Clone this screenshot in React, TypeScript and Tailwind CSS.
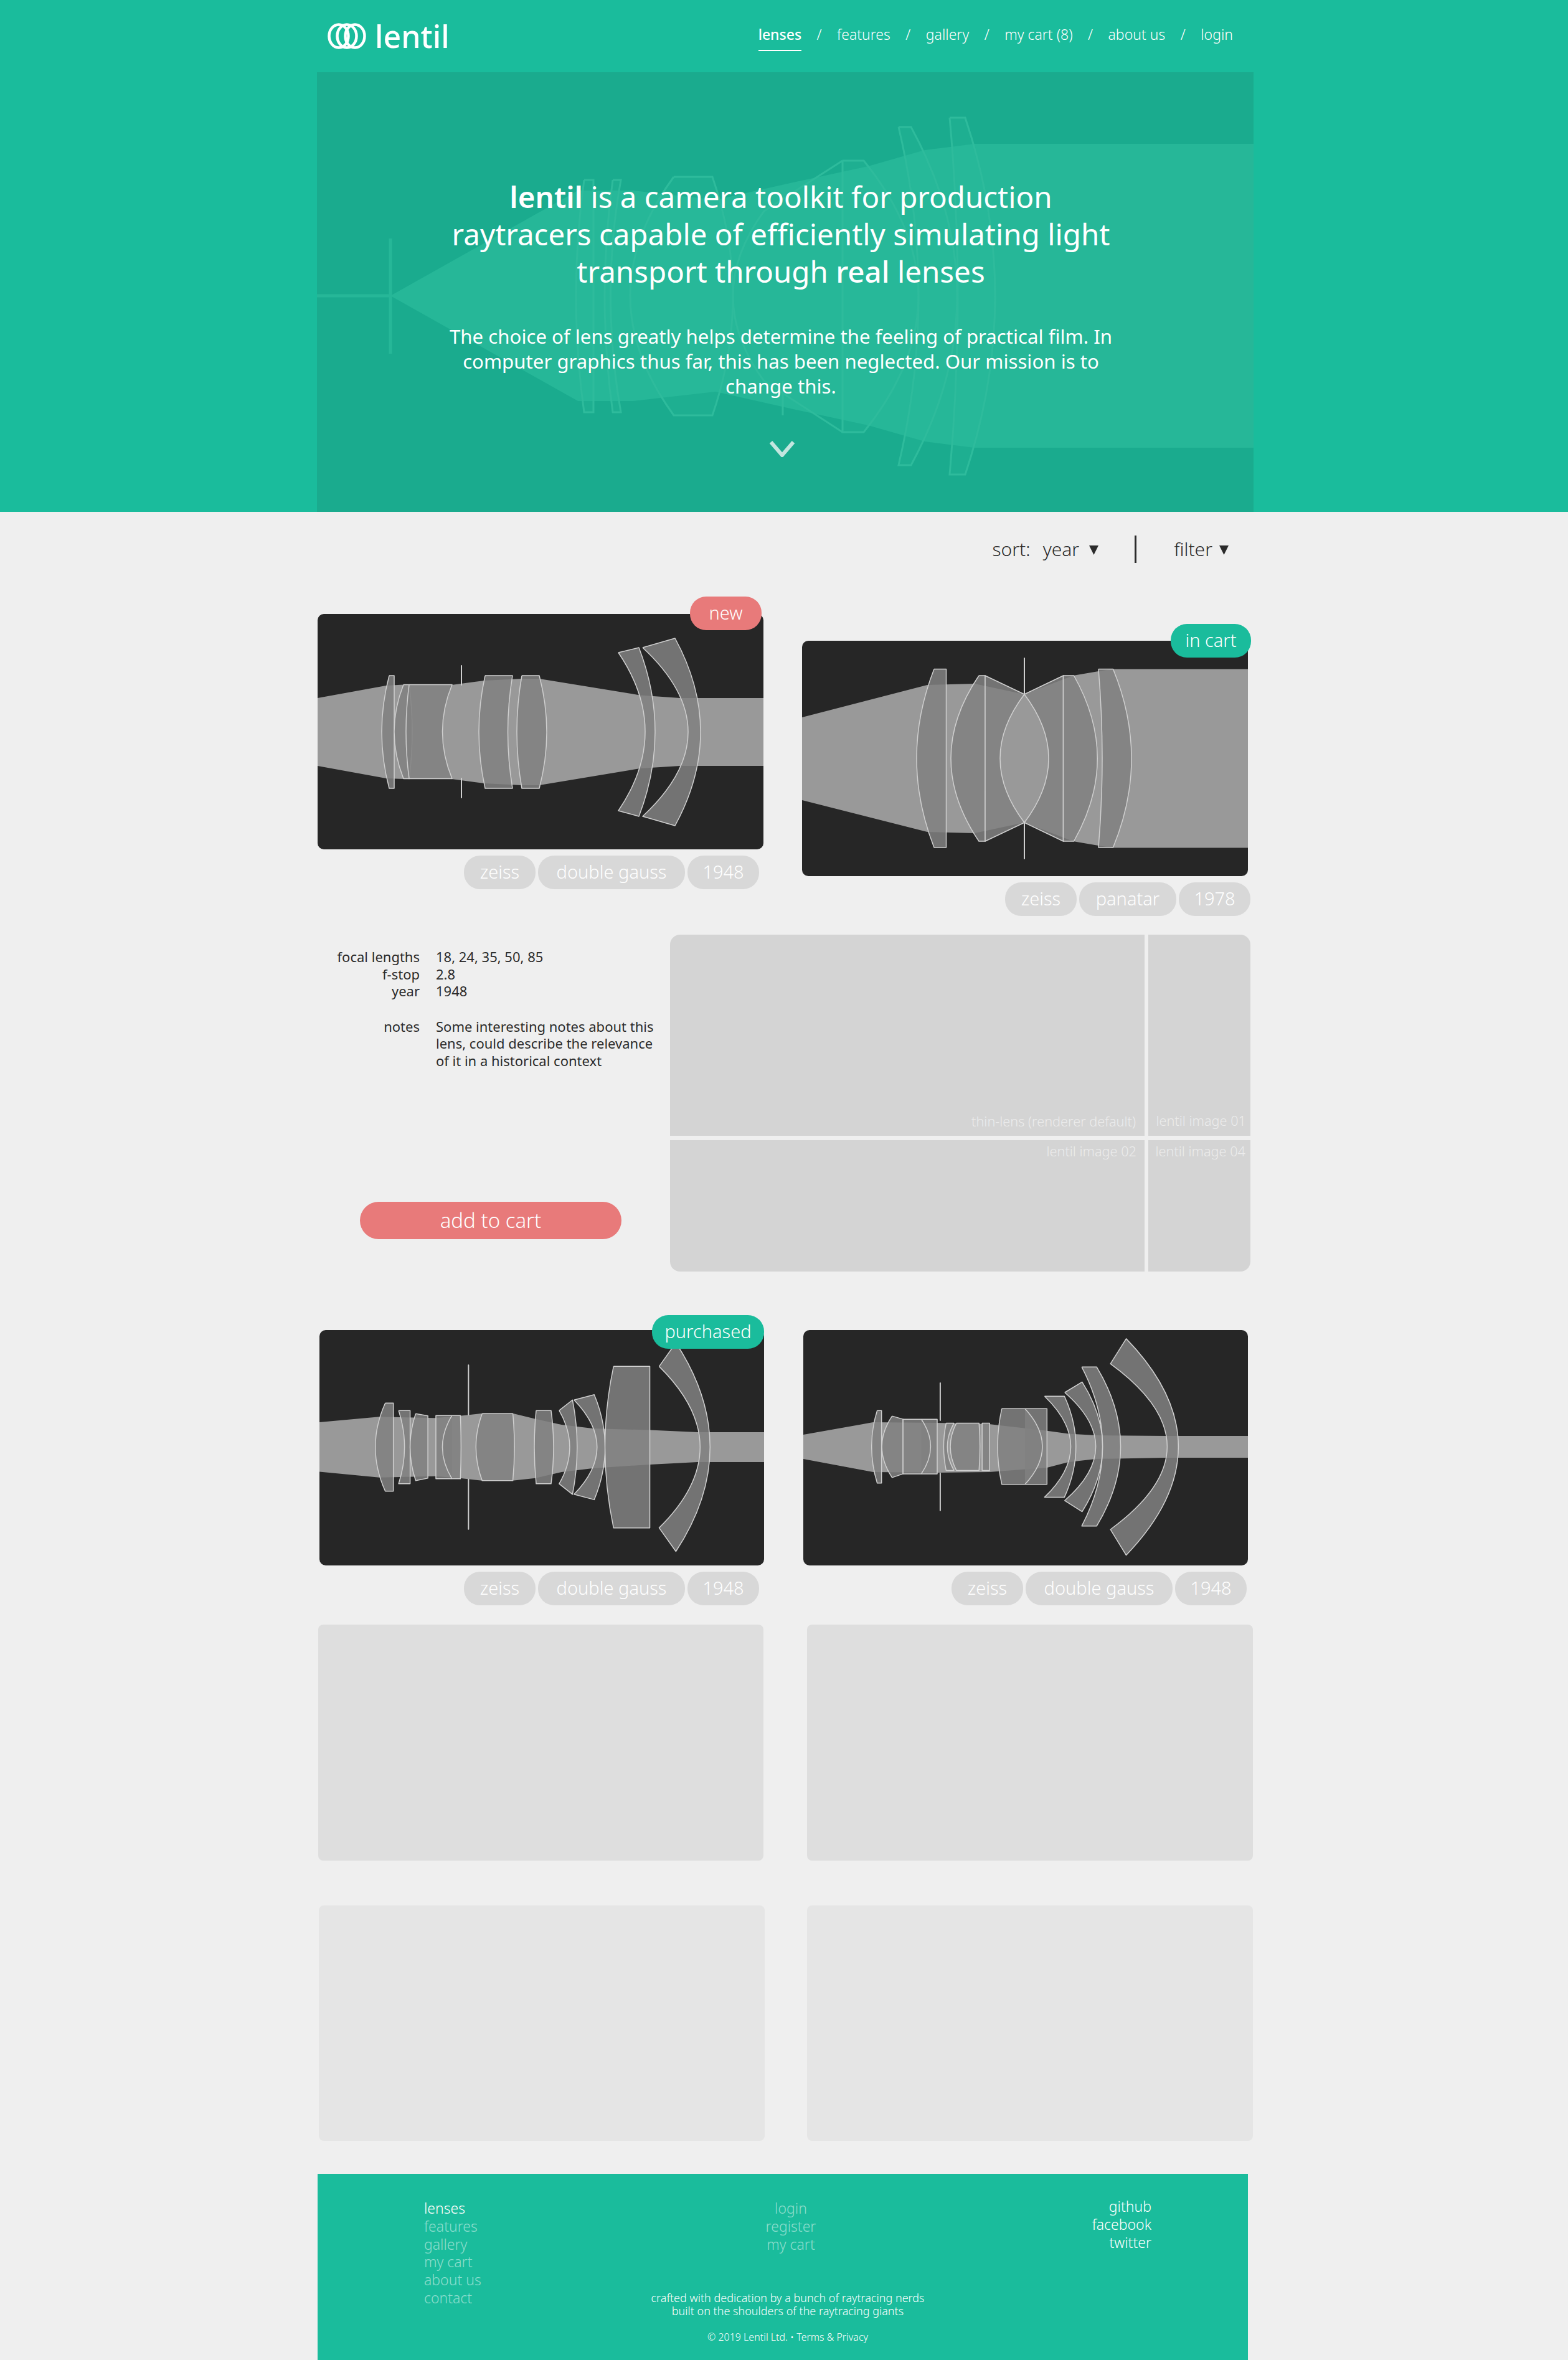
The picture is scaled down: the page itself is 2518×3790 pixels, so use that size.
const navLinks = ["features", "gallery", "my cart (8)", "about us", "login"]

const tagWidths: Record<string, string> = {
  zeiss: "w-[115px]",
  "double gauss": "w-[236px]",
  panatar: "w-[156px]",
  "1948": "w-[115px]",
  "1978": "w-[115px]",
}

function Tag({ label }: { label: string }) {
  return (
    <span className={`flex h-[54px] items-center justify-center rounded-[26px] bg-[#d8d8d8] pb-[3px] text-[29px] font-light text-white ${tagWidths[label]}`}>
      {label}
    </span>
  )
}

function Lens({ d }: { d: string }) {
  return <path d={d} fill="#808080" fillOpacity="0.86" stroke="#cfcfcf" strokeWidth="1.5" strokeLinejoin="round" />
}

function LensSvg({ beam, lenses, stops }: { beam: string; lenses: string[]; stops: string }) {
  return (
    <svg viewBox="0 0 716 378" className="block h-full w-full">
      <polygon points={beam} fill="#999999" />
      {lenses.map((d, i) => (
        <Lens key={i} d={d} />
      ))}
      <path d={stops} fill="none" stroke="#cfcfcf" strokeWidth="2" strokeLinecap="round" />
    </svg>
  )
}

function LensCard({
  badge,
  badgeClass,
  tags,
  width,
  tagsClass,
  children,
}: {
  badge?: string
  badgeClass?: string
  tags: string[]
  width: string
  tagsClass: string
  children: React.ReactNode
}) {
  return (
    <div className={width}>
      <div className="relative h-[378px] rounded-[10px] bg-[#262626]">
        <div className="h-full overflow-hidden rounded-[10px]">{children}</div>
        {badge && (
          <span className={`absolute flex h-[54px] items-center justify-center rounded-[26px] pb-[3px] text-[29px] font-light text-white ${badgeClass}`}>
            {badge}
          </span>
        )}
      </div>
      <div className={`mt-[10px] flex justify-end gap-[4px] ${tagsClass}`}>
        {tags.map((t) => (
          <Tag key={t} label={t} />
        ))}
      </div>
    </div>
  )
}

function Triangle() {
  return (
    <svg viewBox="0 0 15 15" className="h-[15px] w-[15px]">
      <polygon points="0,0 15,0 7.5,15" fill="#2b2b2b" />
    </svg>
  )
}

function HeroArt() {
  return (
    <svg viewBox="0 0 1504 706" className="absolute inset-0 h-full w-full">
      <polygon
        points="118,359 419,190 508,190 640,205 760,178 885,151 976,125 1056,115 1504,115 1504,603 1056,603 976,593 885,567 760,540 640,513 508,528 419,528"
        fill="#26b798"
      />
      <path d="M0 359 H118 M118 267 V452" stroke="#26b798" strokeWidth="5" fill="none" />
      <g fill="#2bbc9c" fillOpacity="0.25" stroke="#2ebb9c" strokeWidth="3">
        <path d="M429 173 H444 V546 H429 Q403 359 429 173" />
        <path d="M475 173 H488 Q455 359 488 546 H475 Q449 359 475 173" />
        <path d="M573 168 H635 Q701 359 635 551 H573 Q433 359 573 168" />
        <path d="M844 142 H878 Q1054 359 878 578 H844 V142" />
        <path d="M934 88 H954 Q1102 359 954 631 H934 Q998 359 934 88" />
        <path d="M1016 73 H1041 Q1137 359 1041 646 H1016 Q1042 359 1016 73" />
      </g>
      <path d="M748 496 V551 M844 142 L718 223 Q618 359 718 496 L844 578" stroke="#2ebb9c" strokeWidth="3" fill="none" />
    </svg>
  )
}

export default function App() {
  return (
    <div className="h-[3790px] overflow-hidden bg-[#efefef] font-['Noto_Sans',sans-serif] text-[#2b2b2b]">
      <div className="bg-[#1abc9c]">
        <header className="flex h-[116px] items-center justify-between pl-[526px] pr-[538px] text-white">
          <div className="flex items-center gap-[14px]">
            <svg viewBox="0 0 62 42" className="h-[42px] w-[62px]" fill="none" stroke="white" strokeWidth="4.5">
              <ellipse cx="18" cy="21" rx="15.5" ry="18.5" />
              <ellipse cx="31" cy="21" rx="15.5" ry="18.5" />
              <ellipse cx="44" cy="21" rx="15.5" ry="18.5" />
            </svg>
            <span className="text-[50px] font-medium leading-none">lentil</span>
          </div>
          <nav className="-mt-[6px] flex items-center text-[23px] font-light">
            <span className="relative font-medium">
              lenses
              <span className="absolute bottom-[-10px] left-0 h-[2px] w-full bg-white" />
            </span>
            {navLinks.map((link) => (
              <span key={link} className="flex items-center">
                <span className="mx-[24.5px]">/</span>
                {link}
              </span>
            ))}
          </nav>
        </header>
        <section className="relative ml-[509px] h-[706px] w-[1504px] bg-[#1aab8e] text-center text-white">
          <HeroArt />
          <div className="relative flex flex-col items-center pr-[14px] pt-[170px]">
            <h1 className="whitespace-nowrap text-[47.5px] font-normal leading-[60px]">
              <span className="font-semibold">lentil</span> is a camera toolkit for production
              <br />
              raytracers capable of efficiently simulating light
              <br />
              transport through <span className="font-medium">real</span> lenses
            </h1>
            <p className="mt-[54px] whitespace-nowrap text-[31.2px] font-normal leading-[40px]">
              The choice of lens greatly helps determine the feeling of practical film. In
              <br />
              computer graphics thus far, this has been neglected. Our mission is to
              <br />
              change this.
            </p>
            <svg viewBox="0 0 42 26" className="ml-[4px] mt-[68px] h-[26px] w-[42px]" fill="none" stroke="#c3e6df" strokeWidth="6">
              <path d="M3 2 L21 23 L39 2" />
            </svg>
          </div>
        </section>
      </div>

      <div className="flex h-[164px] items-start justify-end pr-[545px] pt-[38px] text-[30px] font-light leading-[44px]">
        <span>sort:</span>
        <span className="ml-[20px]">year</span>
        <span className="ml-[16px] mt-[16px]"><Triangle /></span>
        <span className="ml-[58px] h-[44px] w-[3px] bg-[#2b2b2b]" />
        <span className="ml-[60px]">filter</span>
        <span className="ml-[11px] mt-[16px]"><Triangle /></span>
      </div>

      <div className="ml-[510px] flex items-start gap-[62px]">
        <LensCard badge="new" badgeClass="right-[3px] top-[-28px] w-[115px] bg-[#e87a7a]" tags={["zeiss", "double gauss", "1948"]} width="w-[716px]" tagsClass="mr-[7px]">
          <LensSvg
            beam="0,135 110,115 138,113.5 215,114 268,107 327,104 356,104 518,130.5 582,135 716,135 716,244 582,244 518,248 356,275 327,275 268,272 215,265 138,265 110,264 0,244"
            lenses={[
              "M115 99 H123 V280 H115 Q91 189.5 115 99",
              "M138 113.5 H147 Q157 189 147 264.5 H138 Q108 189 138 113.5",
              "M147 113.5 H216 Q185 189 216 264.5 H147 Q137 189 147 113.5",
              "M269 99 H313 Q298 189.5 313 280 H269 Q249 189.5 269 99",
              "M328 99 H356 Q380 189.5 356 280 H328 Q312 189.5 328 99",
              "M483 62 L516 54 Q568 189.5 516 325 L483 316 Q569 189 483 62",
              "M522 54 L574 39 Q656 189.5 574 340 L522 325 Q668 189.5 522 54",
            ]}
            stops="M231 83 V114 M231 264 V295"
          />
        </LensCard>
        <div className="mt-[43px]">
          <LensCard badge="in cart" badgeClass="right-[-5px] top-[-27px] w-[129px] bg-[#1abc9c]" tags={["zeiss", "panatar", "1978"]} width="w-[716px]" tagsClass="mr-[-4px]">
            <LensSvg
              beam="0,123 201,71 277,69 357,86 435,56 476,49 499,45.5 716,45.5 716,332.5 499,332.5 476,329 435,322 357,292 277,309 201,307 0,256"
              lenses={[
                "M212 45.5 H231.5 V332 H212 Q156 189 212 45.5",
                "M284 56 H294 V322 H284 Q194 189 284 56",
                "M294 56 L357 86 Q279 189 357 292 L294 322 Z",
                "M357 86 L419.5 56 V322 L357 292 Q435 189 357 86",
                "M419.5 56 H436.5 Q512 189 436.5 322 H419.5 Z",
                "M476 45.5 H499.5 Q558.5 189 499.5 332 H476 Q488 189 476 45.5",
              ]}
              stops="M357 28 V86 M357 292 V350"
            />
          </LensCard>
        </div>
      </div>

      <div className="ml-[510px] mt-[30px] flex h-[541px] items-stretch">
        <div className="flex w-[566px] flex-col pt-[22px] text-[22px] font-normal leading-[27.5px]">
          <dl className="grid grid-cols-[164px_346px] gap-x-[26px]">
            <dt className="text-right">focal lengths</dt>
            <dd>18, 24, 35, 50, 85</dd>
            <dt className="text-right">f-stop</dt>
            <dd>2.8</dd>
            <dt className="text-right">year</dt>
            <dd>1948</dd>
            <dt className="mt-[29px] text-right">notes</dt>
            <dd className="mt-[29px] whitespace-nowrap">
              Some interesting notes about this
              <br />
              lens, could describe the relevance
              <br />
              of it in a historical context
            </dd>
          </dl>
          <button className="mb-[52px] ml-[68px] mt-auto h-[60px] w-[420px] rounded-[30px] bg-[#e87a7a] text-[33px] font-light text-white">add to cart</button>
        </div>
        <div className="grid w-[932px] grid-cols-[762px_164px] grid-rows-[323px_211px] gap-x-[6px] gap-y-[7px] overflow-hidden rounded-[16px] text-[21.7px] font-light text-[#ececec]">
          <div className="flex items-end justify-end bg-[#d4d4d4] px-[14px] py-[6px]">thin-lens (renderer default)</div>
          <div className="flex items-end justify-end whitespace-nowrap bg-[#d4d4d4] px-[7px] py-[7px]">lentil image 01</div>
          <div className="flex items-start justify-end bg-[#d4d4d4] px-[13px] py-[2px]">lentil image 02</div>
          <div className="flex items-start justify-end whitespace-nowrap bg-[#d4d4d4] px-[8px] py-[2px]">lentil image 04</div>
        </div>
      </div>

      <div className="ml-[513px] mt-[94px] flex items-start gap-[63px]">
        <LensCard badge="purchased" badgeClass="right-0 top-[-24px] w-[180px] bg-[#1abc9c]" tags={["zeiss", "double gauss", "1948"]} width="w-[714px]" tagsClass="mr-[8px]">
          <LensSvg
            beam="0,148 96.5,139 186,141 226,137.6 262,133.7 311,133.7 348,142.6 390,152 440,158 532,160.5 609,164 716,164 716,212 609,212 532,216 440,222 390,228 348,238 311,242 262,242 226,238 186,235 96.5,237 0,227.5"
            lenses={[
              "M106 117 H119 V259 H106 Q74 188 106 117",
              "M127.5 129 H146 V247 H127.5 Q146.5 188 127.5 129",
              "M155 134 L174.6 137.5 V238 L155 242 Q137 188 155 134",
              "M187.5 137 H227 Q229 188 227 239 H187.5 Z",
              "M213.4 137 Q182.6 188 213.4 239",
              "M262 134 H311.4 Q316.6 188 311.4 242 H262 Q242 188 262 134",
              "M349 129 H373 Q381 188 373 247 H349 Q343 188 349 129",
              "M386 129 L407.5 112 Q422.5 188 407.5 264 L386 247 Q420 188 386 129",
              "M410 112 L442.5 103.5 Q477.5 188 442.5 272.6 L410 264 Q484 188 410 112",
              "M473.6 58 H532 V318 H473.6 Q446 188 473.6 58",
              "M547 58 L574 20 Q684 188 574 356 L547 318 Q679 188 547 58",
            ]}
            stops="M240 56 V136 M240 240 V320"
          />
        </LensCard>
        <LensCard tags={["zeiss", "double gauss", "1948"]} width="w-[714px]" tagsClass="mr-[2px]">
          <LensSvg
            beam="0,168 112.5,148 215.6,149 299,151 392.4,161.6 427,166.5 471,169 584,170 716,170 716,205 584,205 471,207 427,212 392.4,221 299,228 215.6,229 112.5,228 0,207"
            lenses={[
              "M119 129 H126 V246 H119 Q101 187 119 129",
              "M143 138 L160.6 143 V231 L143 237 Q110 187 143 138",
              "M160.6 143 H215.6 V231 H160.6 Z",
              "M190 143 Q220 187 190 231",
              "M230 149.5 H242.5 Q221.5 187 242.5 225.5 H230 Q222 187 230 149.5",
              "M246.5 149.5 H283 Q286 187 283 225.5 H246.5 Q227 187 246.5 149.5",
              "M288 149.5 H300 V225.5 H288 Z",
              "M319.7 126 H392.4 V248 H319.7 Q306 187 319.7 126",
              "M357 126 Q413 187 357 248",
              "M388.5 106 H420.5 Q457.5 187 420.5 268.6 H388.5 Q473 187 388.5 106",
              "M421 100 L449 83 Q515 187 449 292 L421 274 Q521 187 421 100",
              "M448.4 59 H472.5 Q549.5 187 472.5 315 H448.4 Q515.6 187 448.4 59",
              "M520 13.4 Q688 187 520 362 L494.6 320.6 Q677.4 187 494.6 53.8 Z",
            ]}
            stops="M220.5 84.6 V145 M220.5 230 V290"
          />
        </LensCard>
      </div>

      <div className="ml-[511px] mt-[31px] flex gap-[70px]">
        <div className="h-[379px] w-[715px] rounded-[8px] bg-[#dedede]" />
        <div className="h-[379px] w-[716px] rounded-[8px] bg-[#dedede]" />
      </div>
      <div className="ml-[512px] mt-[72px] flex gap-[68px]">
        <div className="h-[378px] w-[716px] rounded-[8px] bg-[#e5e5e5]" />
        <div className="h-[378px] w-[716px] rounded-[8px] bg-[#e5e5e5]" />
      </div>

      <footer className="ml-[510px] mt-[53px] flex h-[299px] w-[1494px] bg-[#1abc9c] pl-[171px] pr-[155px] pt-[41px] text-[23px] font-light leading-[28.8px] text-white/50">
        <ul className="w-[300px]">
          <li className="text-white">lenses</li>
          <li>features</li>
          <li>gallery</li>
          <li>my cart</li>
          <li>about us</li>
          <li>contact</li>
        </ul>
        <div className="flex flex-1 flex-col items-center text-center">
          <ul className="ml-[10px]">
            <li>login</li>
            <li>register</li>
            <li>my cart</li>
          </ul>
          <p className="mt-[62px] text-[18px] leading-[21px] text-white">
            crafted with dedication by a bunch of raytracing nerds
            <br />
            built on the shoulders of the raytracing giants
          </p>
          <p className="mt-[21px] text-[16px] leading-[21px] text-white">© 2019 Lentil Ltd. • Terms &amp; Privacy</p>
        </div>
        <ul className="-mt-[3px] w-[300px] text-right text-white">
          <li>github</li>
          <li>facebook</li>
          <li>twitter</li>
        </ul>
      </footer>
    </div>
  )
}
